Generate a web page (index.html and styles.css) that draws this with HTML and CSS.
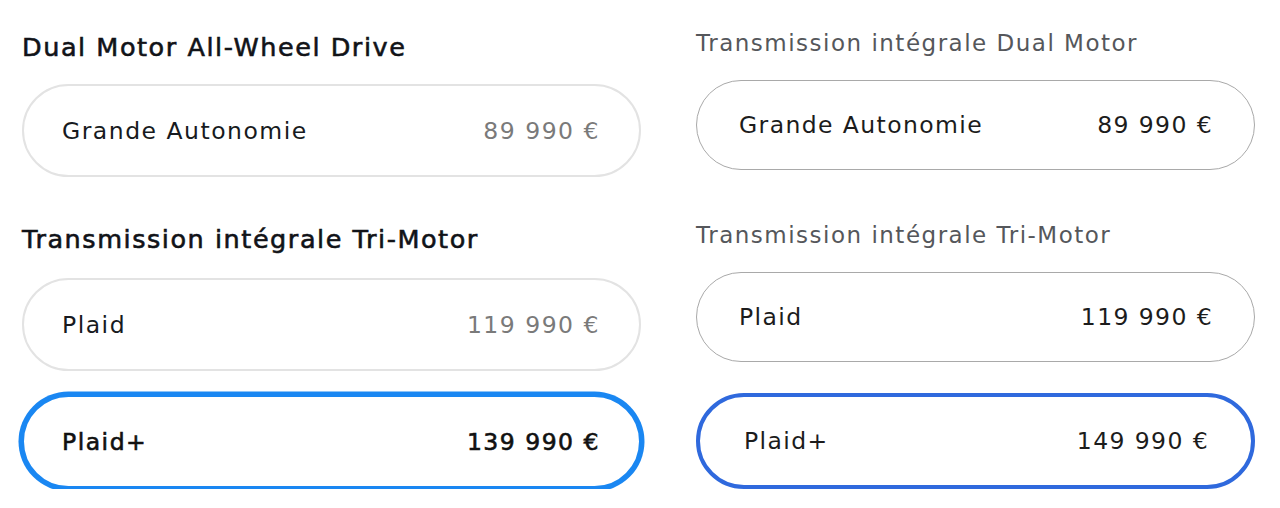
FILE: index.html
```html
<!DOCTYPE html>
<html lang="fr">
<head>
<meta charset="utf-8">
<title>Modèles</title>
<link rel="stylesheet" href="styles.css">
</head>
<body>
<div class="page">
  <section class="col col-left">
    <h2 class="group-title first">Dual Motor All-Wheel Drive</h2>
    <div class="option">
      <span class="label">Grande Autonomie</span>
      <span class="price">89 990 €</span>
    </div>
    <h2 class="group-title">Transmission intégrale Tri-Motor</h2>
    <div class="option">
      <span class="label">Plaid</span>
      <span class="price">119 990 €</span>
    </div>
    <div class="option selected">
      <span class="label">Plaid+</span>
      <span class="price">139 990 €</span>
    </div>
  </section>
  <section class="col col-right">
    <h2 class="group-title first">Transmission intégrale Dual Motor</h2>
    <div class="option">
      <span class="label">Grande Autonomie</span>
      <span class="price">89 990 €</span>
    </div>
    <h2 class="group-title">Transmission intégrale Tri-Motor</h2>
    <div class="option">
      <span class="label">Plaid</span>
      <span class="price">119 990 €</span>
    </div>
    <div class="option selected">
      <span class="label">Plaid+</span>
      <span class="price">149 990 €</span>
    </div>
  </section>
</div>
</body>
</html>
```
FILE: styles.css
```css
* { box-sizing: border-box; }

html, body {
  margin: 0;
  padding: 0;
  background: #ffffff;
}

body {
  font-family: "DejaVu Sans", "Noto Sans", sans-serif;
  color: #171a20;
}

.page {
  display: flex;
  gap: 55px;
  padding-left: 22px;
}

.col {
  display: flex;
  flex-direction: column;
}

.col-left { width: 619px; }
.col-right { width: 559px; }

.group-title {
  margin: 0;
  font-weight: 400;
}

.option {
  display: flex;
  align-items: center;
  justify-content: space-between;
  border-radius: 999px;
  background: #fff;
}

.label, .price { white-space: nowrap; }

/* ---------- left column ---------- */
.col-left .group-title {
  font-size: 25.5px;
  line-height: 30px;
  letter-spacing: 1.55px;
  color: #111318;
  -webkit-text-stroke: 0.6px #111318;
  margin-top: 47px;
  margin-bottom: 24px;
}
.col-left .group-title.first {
  margin-top: 32px;
  margin-bottom: 22px;
}

.col-left .option {
  height: 93px;
  border: 2px solid #e3e3e3;
  padding: 0 39px 0 38px;
  font-size: 23.5px;
  letter-spacing: 1.5px;
}
.col-left .option + .option { margin-top: 24px; }

.col-left .label { color: #171a20; }
.col-left .price { color: #7a7a7a; }

.col-left .option.selected {
  border-color: #1a87f2;
  box-shadow: 0 0 0 3.5px #1a87f2;
}
.col-left .option.selected .label,
.col-left .option.selected .price {
  color: #111;
  -webkit-text-stroke: 0.6px #111;
}

/* ---------- right column ---------- */
.col-right .group-title {
  font-size: 23px;
  line-height: 28px;
  letter-spacing: 1.5px;
  color: #55575b;
  margin-top: 51px;
  margin-bottom: 23px;
}
.col-right .group-title.first {
  margin-top: 29px;
  margin-bottom: 23px;
}

.col-right .option {
  height: 90px;
  border: 1.5px solid #a9a9a9;
  padding: 0 41px 0 42px;
  font-size: 23.5px;
  letter-spacing: 1.4px;
  color: #1c1c1c;
}
.col-right .option + .option { margin-top: 31px; }

.col-right .option.selected {
  height: 96px;
  border: 4px solid #2f69dd;
  padding: 0 42px 0 44px;
}
```
